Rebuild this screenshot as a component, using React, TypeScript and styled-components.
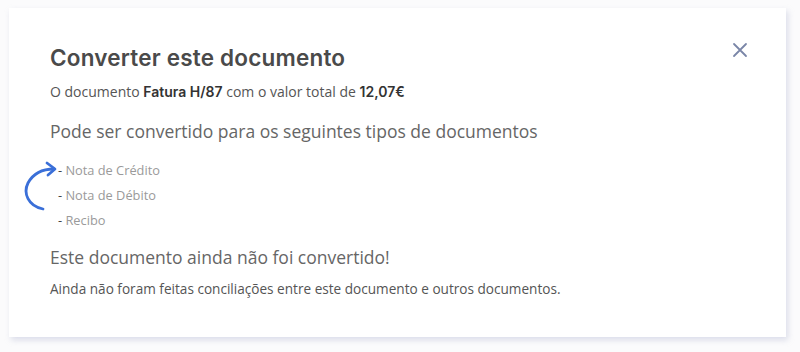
import React from 'react'
import styled, { createGlobalStyle } from 'styled-components'

const GlobalStyle = createGlobalStyle`
    html, body {
        margin: 0;
        padding: 0;
        background: #fbfbfc;
    }
    body {
        font-family: "Open Sans", "Noto Sans", sans-serif;
    }
`

const Page = styled.div`
    width: 800px;
    height: 352px;
    padding: 8px 14px 15px 9px;
    box-sizing: border-box;
`

const Card = styled.section`
    position: relative;
    height: 100%;
    box-sizing: border-box;
    background: #ffffff;
    box-shadow: 2px 3px 6px rgba(170, 175, 205, 0.4);
    padding: 34px 41px 0 41px;
    display: flex;
    flex-direction: column;
`

const CloseButton = styled.button`
    position: absolute;
    top: 30px;
    right: 34px;
    width: 24px;
    height: 24px;
    padding: 0;
    border: 0;
    background: transparent;
    display: flex;
    align-items: center;
    justify-content: center;
    cursor: pointer;
`

const Title = styled.h2`
    margin: 0;
    font-family: Inter, "Liberation Sans", sans-serif;
    font-weight: 600;
    font-size: 22.5px;
    line-height: 32px;
    color: #4a4a4a;
    letter-spacing: 0.2px;
`

const Summary = styled.p`
    margin: 8px 0 0;
    font-size: 14px;
    line-height: 20px;
    color: #555;
`

const Strong = styled.b`
    font-family: Inter, "Liberation Sans", sans-serif;
    font-weight: 600;
    color: #333;
`

const SectionTitle = styled.h3<{ $gap: number }>`
    margin: ${p => p.$gap}px 0 0;
    font-weight: 400;
    font-size: 17.5px;
    line-height: 26px;
    color: #666;
`

const ListWrap = styled.div`
    position: relative;
    margin-top: 14px;
`

const TypeList = styled.ul`
    list-style: none;
    margin: 0;
    padding: 0 0 0 8px;
`

const TypeItem = styled.li`
    font-size: 12.8px;
    line-height: 25px;
    color: #9a9a9a;

    &::before {
        content: "- ";
        color: #444;
    }
`

const ArrowIcon = styled.svg`
    position: absolute;
    left: -28px;
    top: 0;
`

const Note = styled.p`
    margin: 9px 0 0;
    font-size: 13.6px;
    line-height: 20px;
    color: #555;
`

const types = ['Nota de Crédito', 'Nota de Débito', 'Recibo']

export default function App() {
    return (
        <Page>
            <GlobalStyle />
            <Card>
                <CloseButton aria-label="Fechar">
                    <svg width="16" height="16" viewBox="0 0 16 16">
                        <path d="M2 2 L14 14 M14 2 L2 14" stroke="#7a86a8" strokeWidth="1.8" strokeLinecap="round" />
                    </svg>
                </CloseButton>
                <Title>Converter este documento</Title>
                <Summary>
                    O documento <Strong>Fatura H/87</Strong> com o valor total de <Strong>12,07€</Strong>
                </Summary>
                <SectionTitle $gap={16}>Pode ser convertido para os seguintes tipos de documentos</SectionTitle>
                <ListWrap>
                    <ArrowIcon width="40" height="56" viewBox="0 0 40 56">
                        <path d="M21 51 C 6 48, 1 35, 6 25 C 11 16, 20 11, 32 11" fill="none" stroke="#3a6fd8" strokeWidth="2.8" strokeLinecap="round" />
                        <path d="M25 5 L33 11 L26 17" fill="none" stroke="#3a6fd8" strokeWidth="2.8" strokeLinecap="round" strokeLinejoin="round" />
                    </ArrowIcon>
                    <TypeList>
                        {types.map(t => <TypeItem key={t}>{t}</TypeItem>)}
                    </TypeList>
                </ListWrap>
                <SectionTitle $gap={11}>Este documento ainda não foi convertido!</SectionTitle>
                <Note>Ainda não foram feitas conciliações entre este documento e outros documentos.</Note>
            </Card>
        </Page>
    )
}
